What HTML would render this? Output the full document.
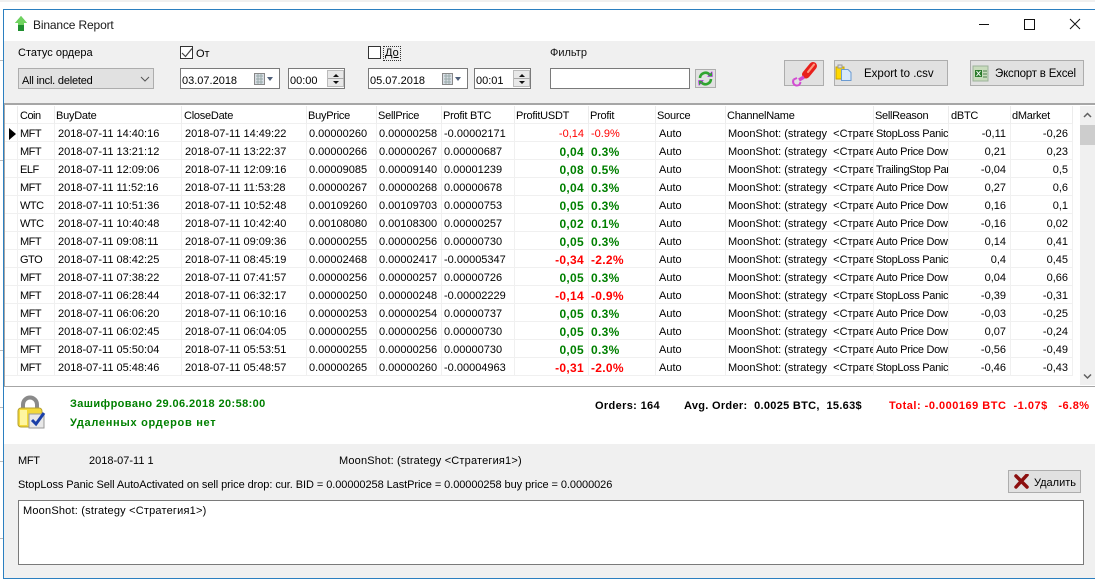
<!DOCTYPE html>
<html lang="ru"><head><meta charset="utf-8"><title>Binance Report</title>
<style>
*{box-sizing:border-box}
html,body{margin:0;padding:0;width:1095px;height:581px;overflow:hidden;background:#fff;font:11px "Liberation Sans","Noto Sans CJK SC",sans-serif;color:#000}
.a{position:absolute;white-space:nowrap}
.box{position:absolute;background:#fff;border:1px solid #7a7a7a}
.btn{position:absolute;background:#e1e1e1;border:1px solid #adadad}
table{position:absolute;left:5px;top:106px;border-collapse:separate;border-spacing:0;table-layout:fixed;width:1068px}
td,th{height:18px;padding:4px 0 0 2px;font-weight:normal;text-align:left;white-space:nowrap;overflow:hidden;border-right:1px solid #f0f0f0;border-bottom:1px solid #f0f0f0;line-height:13px;font-size:11px}
tr:first-child td{border-right:1px solid #ececec;letter-spacing:-.25px;padding-left:1px}
tr:first-child td:nth-child(2),tr:first-child td:nth-child(4),tr:first-child td:nth-child(13){padding-left:2px}
tr td:nth-child(2){letter-spacing:-.5px}
tr td:nth-child(10){padding-left:3px}
tr:first-child td:nth-child(10){padding-left:1px}
tr td:nth-child(12){letter-spacing:-.3px}
td.n{padding-left:3px}
td.r{text-align:right;padding:4px 4px 0 0}
td.g,td.rd{font-weight:bold;font-size:12px;letter-spacing:.3px;padding-top:3px}
td.r.g,td.r.rd{padding-top:3px}
.g{color:#008000}
.rd{color:#f00}
.rl{color:#f00}
.inp{padding-top:1px;line-height:20px!important}
</style></head><body>
<div class="a" style="left:0;top:0;width:1095px;height:2px;background:#f0f0f0"></div>
<div class="a" style="left:0;top:60px;width:3px;height:1px;background:#bbb"></div>
<div class="a" style="left:0;top:160px;width:3px;height:1px;background:#bbb"></div>
<div class="a" style="left:0;top:350px;width:3px;height:1px;background:#bbb"></div>
<div class="a" style="left:0;top:407px;width:3px;height:1px;background:#bbb"></div>
<div class="a" style="left:0;top:461px;width:3px;height:1px;background:#bbb"></div>
<div class="a" style="left:0;top:538px;width:3px;height:1px;background:#bbb"></div>
<div class="a" style="left:3px;top:9px;width:1092px;height:570px;background:#fff;border:1px solid #2b7fc0;border-right:0"></div>
<div class="a" style="left:4px;top:41px;width:1091px;height:62px;background:#f0f0f0"></div>
<div class="a" style="left:4px;top:103px;width:1091px;height:2px;background:#a6a6a6"></div>
<div class="a" style="left:4px;top:105px;width:1px;height:282px;background:#a6a6a6"></div>
<div class="a" style="left:4px;top:386px;width:1091px;height:1px;background:#a6a6a6"></div>
<div class="a" style="left:4px;top:444px;width:1091px;height:134px;background:#f0f0f0"></div>

<svg class="a" style="left:14px;top:15px" width="14" height="17" viewBox="0 0 14 17"><path d="M7 1L13 8H10V16H4V8H1Z" fill="#1f8f2f"/><path d="M7 1L13 8H10V10H4V8H1Z" fill="#6fd35f"/></svg>
<div class="a" style="left:33px;top:18px;font-size:12px;line-height:14px;color:#1a1a1a;letter-spacing:-.15px">Binance Report</div>
<svg class="a" style="left:975px;top:17px" width="115" height="16" viewBox="0 0 115 16" fill="none" stroke="#111"><path d="M4 7.500H14"/><rect x="49.500" y="2.500" width="10" height="10"/><path d="M95 2L105 12M105 2L95 12"/></svg>

<div class="a" style="left:18px;top:47px;line-height:13px">Статус ордера</div>
<div class="a inp" style="left:18px;top:68px;width:136px;height:21px;background:#e1e1e1;border:1px solid #adadad;padding-left:3px;padding-top:2px;letter-spacing:-.2px">All incl. deleted</div>
<svg class="a" style="left:140px;top:76px" width="10" height="6" fill="none" stroke="#555"><path d="M1 1L5 5L9 1"/></svg>

<div class="a" style="left:180px;top:46px;width:13px;height:13px;background:#fff;border:1px solid #333"></div>
<svg class="a" style="left:181px;top:47px" width="12" height="12" fill="none" stroke="#444" stroke-width="1.200"><path d="M1 6L4.500 9.500L11 1.500"/></svg>
<div class="a" style="left:196px;top:48px;line-height:13px">От</div>
<div class="box inp" style="left:180px;top:68px;width:100px;height:21px;padding-left:1px;padding-top:2px;font-size:11px">03.07.2018</div>
<svg class="a" style="left:254px;top:73px" width="24" height="13"><rect x="0.500" y="0.500" width="10" height="11" fill="#d8dde4" stroke="#888"/><path d="M2 3H9M2 6H9M2 9H9M4 1V11M7 1V11" stroke="#9aa"/><path d="M13 4H19L16 8Z" fill="#50607a"/></svg>
<div class="box inp" style="left:288px;top:68px;width:57px;height:21px;padding-left:1px;padding-top:2px">00:00</div>
<div class="a" style="left:327px;top:70px;width:17px;height:17px;background:#e8e8e8;border:1px solid #bbb"></div>
<svg class="a" style="left:328px;top:71px" width="16" height="16"><path d="M8 3L11 6H5Z" fill="#111"/><path d="M0 7.500H16" stroke="#aaa"/><path d="M5 10H11L8 13Z" fill="#111"/></svg>

<div class="a" style="left:368px;top:46px;width:13px;height:13px;background:#fff;border:1px solid #333"></div>
<div class="a" style="left:384px;top:47px;line-height:13px;outline:1px dotted #333;text-decoration:underline;padding:0 1px">До</div>
<div class="box inp" style="left:368px;top:68px;width:100px;height:21px;padding-left:1px;padding-top:2px">05.07.2018</div>
<svg class="a" style="left:442px;top:73px" width="24" height="13"><rect x="0.500" y="0.500" width="10" height="11" fill="#d8dde4" stroke="#888"/><path d="M2 3H9M2 6H9M2 9H9M4 1V11M7 1V11" stroke="#9aa"/><path d="M13 4H19L16 8Z" fill="#50607a"/></svg>
<div class="box inp" style="left:474px;top:68px;width:57px;height:21px;padding-left:1px;padding-top:2px">00:01</div>
<div class="a" style="left:513px;top:70px;width:17px;height:17px;background:#e8e8e8;border:1px solid #bbb"></div>
<svg class="a" style="left:514px;top:71px" width="16" height="16"><path d="M8 3L11 6H5Z" fill="#111"/><path d="M0 7.500H16" stroke="#aaa"/><path d="M5 10H11L8 13Z" fill="#111"/></svg>

<div class="a" style="left:550px;top:47px;line-height:13px;color:#111">Фильтр</div>
<div class="box" style="left:550px;top:68px;width:140px;height:21px"></div>
<div class="btn" style="left:695px;top:69px;width:21px;height:19px"></div>
<svg class="a" style="left:697px;top:70px" width="17" height="17" viewBox="0 0 17 17" fill="none"><path d="M3 8A5.500 5.500 0 0 1 12.500 4.500" stroke="#2fa52f" stroke-width="2.600"/><path d="M10.500 6.500L15.500 6.500L15 1.500Z" fill="#2fa52f" stroke="#b0f" stroke-width=".5"/><path d="M14 9A5.500 5.500 0 0 1 4.500 12.500" stroke="#2fa52f" stroke-width="2.600"/><path d="M6.500 10.500L1.500 10.500L2 15.500Z" fill="#2fa52f" stroke="#b0f" stroke-width=".5"/></svg>

<div class="btn" style="left:784px;top:60px;width:40px;height:26px"></div>
<svg class="a" style="left:790px;top:60px" width="30" height="27" viewBox="0 0 30 27" fill="none"><path d="M13.500 14L17 18" stroke="#e8c0e8" stroke-width="1"/><path d="M23 6L16 14.500" stroke="#e8201c" stroke-width="8" stroke-linecap="round"/><path d="M24 4.500L18 12" stroke="#ff9a80" stroke-width="2" stroke-linecap="round"/><path d="M14 17L9 20" stroke="#d24bd2" stroke-width="3.500"/><path d="M3.500 19.500Q2 24 6 25.500Q10 26 10.500 22" stroke="#d24bd2" stroke-width="2"/><path d="M3.500 19.500L7 18" stroke="#d24bd2" stroke-width="2"/></svg>
<div class="btn" style="left:834px;top:60px;width:114px;height:26px"></div>
<svg class="a" style="left:835px;top:64px" width="18" height="18" viewBox="0 0 18 18"><rect x="1" y="3" width="8" height="12" fill="#ffd800" stroke="#c9a400"/><rect x="3" y="1" width="4" height="3" fill="#ddd" stroke="#999"/><path d="M6.500 5.500H13L16 8.500V16.500H6.500Z" fill="#d8e8fa" stroke="#6c9bd1"/></svg>
<div class="a" style="left:864px;top:67px;line-height:14px;font-size:11.500px">Export to .csv</div>
<div class="btn" style="left:970px;top:60px;width:114px;height:26px"></div>
<svg class="a" style="left:972px;top:65px" width="18" height="18" viewBox="0 0 18 18"><rect x="1" y="1" width="15" height="15" fill="#c8dcbc" stroke="#9db29a"/><rect x="3" y="5" width="7" height="7" fill="#2a7a2a"/><path d="M4.500 6L8.500 11M8.500 6L4.500 11" stroke="#fff"/><path d="M11 6H15M11 9H15M11 12H15" stroke="#4d7f4d"/></svg>
<div class="a" style="left:995px;top:67px;line-height:14px;font-size:11.500px;letter-spacing:-.2px">Экспорт в Excel</div>

<table>
<colgroup><col style="width:13px"><col style="width:37px"><col style="width:127px"><col style="width:125px"><col style="width:70px"><col style="width:65px"><col style="width:73px"><col style="width:74px"><col style="width:67px"><col style="width:70px"><col style="width:148px"><col style="width:75px"><col style="width:62px"><col style="width:62px"></colgroup>
<tr><td></td><td>Coin</td><td>BuyDate</td><td>CloseDate</td><td>BuyPrice</td><td>SellPrice</td><td>Profit BTC</td><td>ProfitUSDT</td><td>Profit</td><td>Source</td><td>ChannelName</td><td>SellReason</td><td>dBTC</td><td>dMarket</td></tr>
<tr><td style="padding:0"><svg width="10" height="12" style="display:block;margin:3px 0 0 4px"><path d="M0 0L7 6L0 12Z" fill="#000"/></svg></td><td>MFT</td><td class="n">2018-07-11 14:40:16</td><td class="n">2018-07-11 14:49:22</td><td>0.00000260</td><td>0.00000258</td><td>-0.00002171</td><td class="r rl">-0,14</td><td class="rl">-0.9%</td><td>Auto</td><td>MoonShot: (strategy &nbsp;&lt;Стратегия1&gt;)</td><td>StopLoss Panic Sell</td><td class="r">-0,11</td><td class="r">-0,26</td></tr>
<tr><td></td><td>MFT</td><td class="n">2018-07-11 13:21:12</td><td class="n">2018-07-11 13:22:37</td><td>0.00000266</td><td>0.00000267</td><td>0.00000687</td><td class="r g">0,04</td><td class="g">0.3%</td><td>Auto</td><td>MoonShot: (strategy &nbsp;&lt;Стратегия1&gt;)</td><td>Auto Price Down</td><td class="r">0,21</td><td class="r">0,23</td></tr>
<tr><td></td><td>ELF</td><td class="n">2018-07-11 12:09:06</td><td class="n">2018-07-11 12:09:16</td><td>0.00009085</td><td>0.00009140</td><td>0.00001239</td><td class="r g">0,08</td><td class="g">0.5%</td><td>Auto</td><td>MoonShot: (strategy &nbsp;&lt;Стратегия1&gt;)</td><td>TrailingStop Panic</td><td class="r">-0,04</td><td class="r">0,5</td></tr>
<tr><td></td><td>MFT</td><td class="n">2018-07-11 11:52:16</td><td class="n">2018-07-11 11:53:28</td><td>0.00000267</td><td>0.00000268</td><td>0.00000678</td><td class="r g">0,04</td><td class="g">0.3%</td><td>Auto</td><td>MoonShot: (strategy &nbsp;&lt;Стратегия1&gt;)</td><td>Auto Price Down</td><td class="r">0,27</td><td class="r">0,6</td></tr>
<tr><td></td><td>WTC</td><td class="n">2018-07-11 10:51:36</td><td class="n">2018-07-11 10:52:48</td><td>0.00109260</td><td>0.00109703</td><td>0.00000753</td><td class="r g">0,05</td><td class="g">0.3%</td><td>Auto</td><td>MoonShot: (strategy &nbsp;&lt;Стратегия1&gt;)</td><td>Auto Price Down</td><td class="r">0,16</td><td class="r">0,1</td></tr>
<tr><td></td><td>WTC</td><td class="n">2018-07-11 10:40:48</td><td class="n">2018-07-11 10:42:40</td><td>0.00108080</td><td>0.00108300</td><td>0.00000257</td><td class="r g">0,02</td><td class="g">0.1%</td><td>Auto</td><td>MoonShot: (strategy &nbsp;&lt;Стратегия1&gt;)</td><td>Auto Price Down</td><td class="r">-0,16</td><td class="r">0,02</td></tr>
<tr><td></td><td>MFT</td><td class="n">2018-07-11 09:08:11</td><td class="n">2018-07-11 09:09:36</td><td>0.00000255</td><td>0.00000256</td><td>0.00000730</td><td class="r g">0,05</td><td class="g">0.3%</td><td>Auto</td><td>MoonShot: (strategy &nbsp;&lt;Стратегия1&gt;)</td><td>Auto Price Down</td><td class="r">0,14</td><td class="r">0,41</td></tr>
<tr><td></td><td>GTO</td><td class="n">2018-07-11 08:42:25</td><td class="n">2018-07-11 08:45:19</td><td>0.00002468</td><td>0.00002417</td><td>-0.00005347</td><td class="r rd">-0,34</td><td class="rd">-2.2%</td><td>Auto</td><td>MoonShot: (strategy &nbsp;&lt;Стратегия1&gt;)</td><td>StopLoss Panic Sell</td><td class="r">0,4</td><td class="r">0,45</td></tr>
<tr><td></td><td>MFT</td><td class="n">2018-07-11 07:38:22</td><td class="n">2018-07-11 07:41:57</td><td>0.00000256</td><td>0.00000257</td><td>0.00000726</td><td class="r g">0,05</td><td class="g">0.3%</td><td>Auto</td><td>MoonShot: (strategy &nbsp;&lt;Стратегия1&gt;)</td><td>Auto Price Down</td><td class="r">0,04</td><td class="r">0,66</td></tr>
<tr><td></td><td>MFT</td><td class="n">2018-07-11 06:28:44</td><td class="n">2018-07-11 06:32:17</td><td>0.00000250</td><td>0.00000248</td><td>-0.00002229</td><td class="r rd">-0,14</td><td class="rd">-0.9%</td><td>Auto</td><td>MoonShot: (strategy &nbsp;&lt;Стратегия1&gt;)</td><td>StopLoss Panic Sell</td><td class="r">-0,39</td><td class="r">-0,31</td></tr>
<tr><td></td><td>MFT</td><td class="n">2018-07-11 06:06:20</td><td class="n">2018-07-11 06:10:16</td><td>0.00000253</td><td>0.00000254</td><td>0.00000737</td><td class="r g">0,05</td><td class="g">0.3%</td><td>Auto</td><td>MoonShot: (strategy &nbsp;&lt;Стратегия1&gt;)</td><td>Auto Price Down</td><td class="r">-0,03</td><td class="r">-0,25</td></tr>
<tr><td></td><td>MFT</td><td class="n">2018-07-11 06:02:45</td><td class="n">2018-07-11 06:04:05</td><td>0.00000255</td><td>0.00000256</td><td>0.00000730</td><td class="r g">0,05</td><td class="g">0.3%</td><td>Auto</td><td>MoonShot: (strategy &nbsp;&lt;Стратегия1&gt;)</td><td>Auto Price Down</td><td class="r">0,07</td><td class="r">-0,24</td></tr>
<tr><td></td><td>MFT</td><td class="n">2018-07-11 05:50:04</td><td class="n">2018-07-11 05:53:51</td><td>0.00000255</td><td>0.00000256</td><td>0.00000730</td><td class="r g">0,05</td><td class="g">0.3%</td><td>Auto</td><td>MoonShot: (strategy &nbsp;&lt;Стратегия1&gt;)</td><td>Auto Price Down</td><td class="r">-0,56</td><td class="r">-0,49</td></tr>
<tr><td></td><td>MFT</td><td class="n">2018-07-11 05:48:46</td><td class="n">2018-07-11 05:48:57</td><td>0.00000265</td><td>0.00000260</td><td>-0.00004963</td><td class="r rd">-0,31</td><td class="rd">-2.0%</td><td>Auto</td><td>MoonShot: (strategy &nbsp;&lt;Стратегия1&gt;)</td><td>StopLoss Panic Sell</td><td class="r">-0,46</td><td class="r">-0,43</td></tr>
</table>

<div class="a" style="left:1080px;top:106px;width:15px;height:279px;background:#f0f0f0"></div>
<div class="a" style="left:1080px;top:125px;width:15px;height:20px;background:#cdcdcd"></div>
<svg class="a" style="left:1083px;top:112px" width="10" height="7" fill="none" stroke="#606060" stroke-width="1.500"><path d="M1 5L4.500 1.500L8 5"/></svg>
<svg class="a" style="left:1083px;top:373px" width="10" height="7" fill="none" stroke="#606060" stroke-width="1.500"><path d="M1 1.500L4.500 5L8 1.500"/></svg>

<svg class="a" style="left:16px;top:395px" width="32" height="36" viewBox="0 0 32 36"><path d="M7 15V9.500A7 7 0 0 1 21 9.500V15" fill="none" stroke="#8a8a8a" stroke-width="4"/><rect x="2" y="13" width="24" height="19" rx="3" fill="#f3d93a" stroke="#b5a030"/><rect x="4" y="15" width="7" height="15" fill="#fff6a0"/><rect x="13" y="19" width="15" height="14" fill="#e8e8e8" stroke="#999"/><path d="M16 25L20 29L28 18" fill="none" stroke="#1a3fa8" stroke-width="3"/></svg>
<div class="a" style="left:70px;top:398px;font-weight:bold;color:#008000;line-height:13px;letter-spacing:.4px">Зашифровано 29.06.2018 20:58:00</div>
<div class="a" style="left:70px;top:417px;font-weight:bold;color:#008000;line-height:13px;letter-spacing:.7px">Удаленных ордеров нет</div>
<div class="a" style="left:595px;top:400px;font-weight:bold;line-height:13px;letter-spacing:.35px">Orders: 164</div>
<div class="a" style="left:684px;top:400px;font-weight:bold;line-height:13px;letter-spacing:.3px">Avg. Order:&nbsp; 0.0025 BTC,&nbsp; 15.63$</div>
<div class="a" style="left:889px;top:400px;font-weight:bold;color:#f00;line-height:13px;letter-spacing:.5px">Total: -0.000169 BTC&nbsp; -1.07$ &nbsp; -6.8%</div>

<div class="a" style="left:18px;top:455px;line-height:13px;letter-spacing:-.3px">MFT</div>
<div class="a" style="left:89px;top:455px;line-height:13px">2018-07-11 1</div>
<div class="a" style="left:339px;top:455px;line-height:13px;letter-spacing:.18px">MoonShot: (strategy &lt;Стратегия1&gt;)</div>
<div class="a" style="left:18px;top:479px;line-height:13px;letter-spacing:-.07px">StopLoss Panic Sell AutoActivated on sell price drop: cur. BID = 0.00000258 LastPrice = 0.00000258 buy price = 0.0000026</div>
<div class="btn" style="left:1008px;top:470px;width:73px;height:23px"></div>
<svg class="a" style="left:1014px;top:474px" width="15" height="15" viewBox="0 0 15 15"><path d="M2 2L13 13M13 1L2 13" stroke="#8c0f0f" stroke-width="3.500" stroke-linecap="round"/></svg>
<div class="a" style="left:1034px;top:477px;line-height:13px">Удалить</div>
<div class="box" style="left:18px;top:500px;width:1066px;height:65px;padding:4px 0 0 4px;line-height:13px;letter-spacing:.2px">MoonShot: (strategy &lt;Стратегия1&gt;)</div>
</body></html>
